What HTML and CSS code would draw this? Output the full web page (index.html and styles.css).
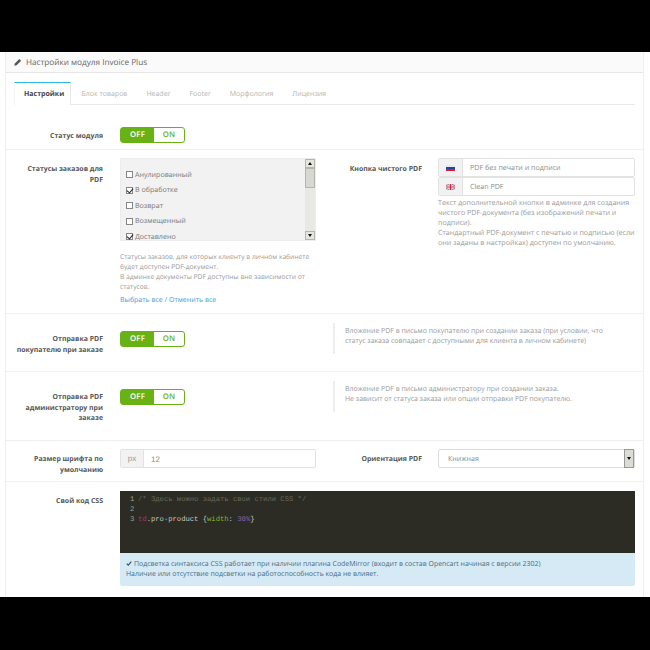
FILE: index.html
```html
<!DOCTYPE html>
<html lang="ru">
<head>
<meta charset="utf-8">
<title>Настройки модуля Invoice Plus</title>
<link rel="stylesheet" href="styles.css">
</head>
<body>
<div class="black top"></div>
<main class="panel">
  <header class="panel-head">
    <svg class="pencil" viewBox="0 0 8 8" width="8" height="8"><path d="M0.3 7.7 L0.8 5.4 L5.3 0.9 L7.1 2.7 L2.6 7.2 Z" fill="#555"/></svg>
    <span>Настройки модуля Invoice Plus</span>
  </header>
  <div class="panel-body">
    <nav class="tabs">
      <a class="tab active">Настройки</a>
      <a class="tab">Блок товаров</a>
      <a class="tab">Header</a>
      <a class="tab">Footer</a>
      <a class="tab">Морфология</a>
      <a class="tab">Лицензия</a>
    </nav>
  </div>
  <section class="row row-status">
    <label class="lbl">Статус модуля</label>
    <div class="toggle"><span class="off">OFF</span><span class="on">ON</span></div>
  </section>
  <section class="row row-orders">
    <label class="lbl">Статусы заказов для PDF</label>
    <div>
      <div class="listbox">
        <div class="items">
          <div class="item"><i class="cb"></i>Анулированный</div>
          <div class="item"><i class="cb checked"></i>В обработке</div>
          <div class="item"><i class="cb"></i>Возврат</div>
          <div class="item"><i class="cb"></i>Возмещенный</div>
          <div class="item"><i class="cb checked"></i>Доставлено</div>
        </div>
        <div class="sb"><b class="sb-up"></b><b class="sb-thumb"></b><b class="sb-down"></b></div>
      </div>
      <p class="help help-list">Статусы заказов, для которых клиенту в личном кабинете будет доступен PDF-документ.<br>В админке документы PDF доступны вне зависимости от статусов.</p>
      <p class="links"><a>Выбрать все</a> / <a>Отменить все</a></p>
    </div>
    <label class="lbl lbl-right">Кнопка чистого PDF</label>
    <div>
      <div class="input-group">
        <span class="addon flag-addon"><svg viewBox="0 0 9 6" width="9" height="6"><rect width="9" height="2" fill="#e8e8f0"/><rect y="2" width="9" height="2" fill="#2b3fa8"/><rect y="4" width="9" height="2" fill="#d8202c"/></svg></span>
        <span class="field">PDF без печати и подписи</span>
      </div>
      <div class="input-group">
        <span class="addon flag-addon"><svg viewBox="0 0 9 6" width="9" height="6"><rect width="9" height="6" fill="#8a8fc0"/><path d="M0 0L9 6M9 0L0 6" stroke="#f0e0e0" stroke-width="1"/><path d="M4.5 0V6M0 3H9" stroke="#f4f4f4" stroke-width="2"/><path d="M4.5 0V6M0 3H9" stroke="#d8202c" stroke-width="1"/></svg></span>
        <span class="field">Clean PDF</span>
      </div>
      <p class="help help-flag">Текст дополнительной кнопки в админке для создания чистого PDF-документа (без изображений печати и подписи).<br>Стандартный PDF-документ с печатью и подписью (если они заданы в настройках) доступен по умолчанию.</p>
    </div>
  </section>
  <section class="row row-customer">
    <label class="lbl">Отправка PDF покупателю при заказе</label>
    <div class="toggle"><span class="off">OFF</span><span class="on">ON</span></div>
    <blockquote class="note">Вложение PDF в письмо покупателю при создании заказа (при условии, что статус заказа совпадает с доступными для клиента в личном кабинете)</blockquote>
  </section>
  <section class="row row-admin">
    <label class="lbl">Отправка PDF администратору при заказе</label>
    <div class="toggle"><span class="off">OFF</span><span class="on">ON</span></div>
    <blockquote class="note">Вложение PDF в письмо администратору при создании заказа.<br>Не зависит от статуса заказа или опции отправки PDF покупателю.</blockquote>
  </section>
  <section class="row row-font">
    <label class="lbl">Размер шрифта по умолчанию</label>
    <div class="input-group">
      <span class="addon px-addon">px</span>
      <span class="field field-num">12</span>
    </div>
    <label class="lbl lbl-right">Ориентация PDF</label>
    <div class="select"><span>Книжная</span><b class="select-btn"></b></div>
  </section>
  <section class="row row-code">
    <label class="lbl">Свой код CSS</label>
    <div class="code-wrap">
      <pre class="code"><span class="ln">1</span><span class="c-com">/* Здесь можно задать свои стили CSS */</span>
<span class="ln">2</span>
<span class="ln">3</span><span class="c-tag">td</span>.pro-product {<span class="c-prop">width</span>: <span class="c-num">30%</span>}</pre>
      <div class="info">
        <svg class="check" viewBox="0 0 8 7" width="6" height="5"><path d="M0.8 3.6 L3 5.8 L7.2 1" fill="none" stroke="#2c5a76" stroke-width="1.7"/></svg>Подсветка синтаксиса CSS работает при наличии плагина CodeMirror (входит в состав Opencart начиная с версии 2302)<br>Наличие или отсутствие подсветки на работоспособность кода не влияет.
      </div>
    </div>
  </section>
</main>
<div class="black bottom"></div>
</body>
</html>
```
FILE: styles.css
```css
* { box-sizing: border-box; }
html, body { margin: 0; padding: 0; background: #fff; }
body {
  width: 650px;
  height: 650px;
  overflow: hidden;
  font-family: "Open Sans", "Liberation Sans", sans-serif;
  font-size: 7px;
  color: #888;
  display: flex;
  flex-direction: column;
  text-rendering: geometricPrecision;
}
.black { background: #000; flex: none; }
.top { height: 52px; }
.bottom { flex: 1; }

.panel {
  height: 545px;
  margin: 0 6px 0 5px;
  border-left: 1px solid #eee;
  border-right: 1px solid #eee;
  background: #fff;
}
.panel-head {
  height: 21px;
  padding-left: 8px;
  display: flex;
  align-items: center;
  gap: 4px;
  background: #fafafa;
  border-bottom: 1px solid #e6e6e6;
  color: #666;
  font-size: 8.2px;
}
.pencil { flex: none; }

.panel-body { padding: 9px 8px 0 8px; }
.tabs {
  display: flex;
  height: 23px;
  border-bottom: 1px solid #e8e8e8;
}
.tab {
  padding: 1px 9.5px 0;
  line-height: 23px;
  color: #b4b4b4;
  font-size: 7px;
  white-space: nowrap;
}
.tab.active {
  width: 57px;
  height: 23px;
  margin-right: 1px;
  margin-bottom: -1px;
  padding: 0 9px;
  border-top: 1px solid #2db8e0;
  border-left: 1px solid #f2f2f2;
  border-right: 1px solid #e8e8e8;
  background: #fff;
  color: #444;
  font-weight: 700;
}

.row {
  display: grid;
  grid-template-columns: 114px 196px 122px 197px;
  align-items: start;
  border-bottom: 1px solid #f0f0f0;
}
.lbl {
  display: block;
  padding: 0 17px 0 10px;
  text-align: right;
  font-weight: 700;
  color: #555;
  font-size: 6.95px;
  line-height: 10.6px;
}
.lbl-right { padding-right: 16px; }

.row-status { height: 45px; padding-top: 22px; }
.row-status .lbl { padding-top: 5px; }
.row-orders { height: 164px; padding-top: 8px; }
.row-orders .lbl { padding-top: 7px; }
.row-customer { height: 58px; padding-top: 17px; }
.row-customer .lbl { padding-top: 4px; }
.row-admin { height: 69px; padding-top: 17px; }
.row-admin .lbl { padding-top: 4px; }
.row-font { height: 41px; padding-top: 8px; }
.row-font .lbl { padding-top: 6px; }
.row-code { border-bottom: 0; padding-top: 9px; }
.row-code .lbl { padding-top: 6px; }

.toggle {
  width: 65px;
  height: 16px;
  display: flex;
  border: 1.5px solid #68b216;
  border-radius: 3px;
  background: #fff;
  font-weight: 600;
  font-size: 7.8px;
  line-height: 15px;
  text-align: center;
  letter-spacing: .2px;
}
.off { width: 33px; background: #68b216; color: #fff; }
.on { flex: 1; color: #68b216; }

.listbox {
  height: 83px;
  display: flex;
  background: #f2f2f2;
  border: 1px solid #ececec;
  overflow: hidden;
}
.items { flex: 1; padding: 8px 0 0 5px; color: #777; }
.item {
  height: 15.5px;
  display: flex;
  align-items: center;
  gap: 2px;
  font-size: 7.1px;
}
.cb {
  width: 7px;
  height: 7px;
  flex: none;
  border: 1px solid #888;
  background: #fff;
  position: relative;
}
.cb.checked::after {
  content: "";
  position: absolute;
  left: 1px;
  top: -1px;
  width: 3px;
  height: 5px;
  border: solid #222;
  border-width: 0 1.4px 1.4px 0;
  transform: rotate(40deg);
}
.sb {
  width: 10px;
  flex: none;
  display: flex;
  flex-direction: column;
  background: #e8e8e4;
}
.sb b { display: block; width: 10px; background: #d8d8d2; border: 1px solid #b5b5ae; }
.sb .sb-up, .sb .sb-down { height: 9px; position: relative; background: #e6e6e0; }
.sb-up::after, .sb-down::after, .select-btn::after {
  content: "";
  position: absolute;
  left: 2px;
  border-left: 2.5px solid transparent;
  border-right: 2.5px solid transparent;
}
.sb-up::after { top: 2px; border-bottom: 3px solid #111; }
.sb-down::after { top: 2px; border-top: 3px solid #111; }
.sb-thumb { height: 20px; }
.sb .sb-down { margin-top: auto; }

.help { margin: 0; color: #999; font-size: 6.7px; line-height: 10px; }
.help-list { margin-top: 11px; }
.help-flag { margin-top: 2px; font-size: 7.1px; }
.links { margin: 4px 0 0; color: #4a9ad6; font-size: 7px; line-height: 10px; }
.links a { color: #4a9ad6; }

.input-group {
  height: 19px;
  display: flex;
  border: 1px solid #e2e2e2;
  border-radius: 2px;
  background: #fff;
}
.addon {
  flex: none;
  display: flex;
  align-items: center;
  justify-content: center;
  background: #f2f2f2;
  border-right: 1px solid #e2e2e2;
}
.flag-addon { width: 24px; }
.px-addon { width: 23px; color: #999; font-family: "Liberation Sans", sans-serif; font-size: 8px; }
.field { padding-left: 7px; line-height: 19px; color: #8a8a8a; font-size: 7.1px; }
.field-num { font-family: "Liberation Sans", sans-serif; font-size: 8px; }

.note {
  grid-column: 3 / 5;
  margin: -8px 14px 0 17px;
  height: 31px;
  border-left: 2px solid #eee;
  padding: 4px 0 0 10px;
  color: #999;
  font-size: 6.95px;
  line-height: 10px;
}

.select {
  height: 19px;
  display: flex;
  align-items: center;
  justify-content: space-between;
  border: 1px solid #ddd;
  border-radius: 2px;
  padding-left: 9px;
  color: #888;
  font-size: 7.1px;
}
.select > span { padding-top: 1px; }
.select-btn {
  width: 10px;
  height: 19px;
  background: #dcdcd6;
  border: 1px solid #999;
  position: relative;
}
.select-btn::after { top: 7px; border-top: 3px solid #111; }

.code-wrap { grid-column: 2 / 5; }
.code {
  margin: 0;
  height: 62px;
  padding: 4px 0 0 10px;
  background: #2c2c25;
  color: #c8c8c2;
  font-family: "Liberation Mono", monospace;
  font-size: 7.2px;
  line-height: 10px;
}
.ln { display: inline-block; width: 8px; color: #a0a09a; }
.c-com { color: #6a6a58; }
.c-tag { color: #c42a62; }
.c-prop { color: #86b82a; }
.c-num { color: #8560b8; }
.info {
  height: 33px;
  padding: 7px 0 0 6px;
  background: #d6eaf5;
  border-radius: 0 0 2px 2px;
  color: #466a82;
  font-size: 6.95px;
  line-height: 10px;
}
.check { margin-right: 2px; }
```
